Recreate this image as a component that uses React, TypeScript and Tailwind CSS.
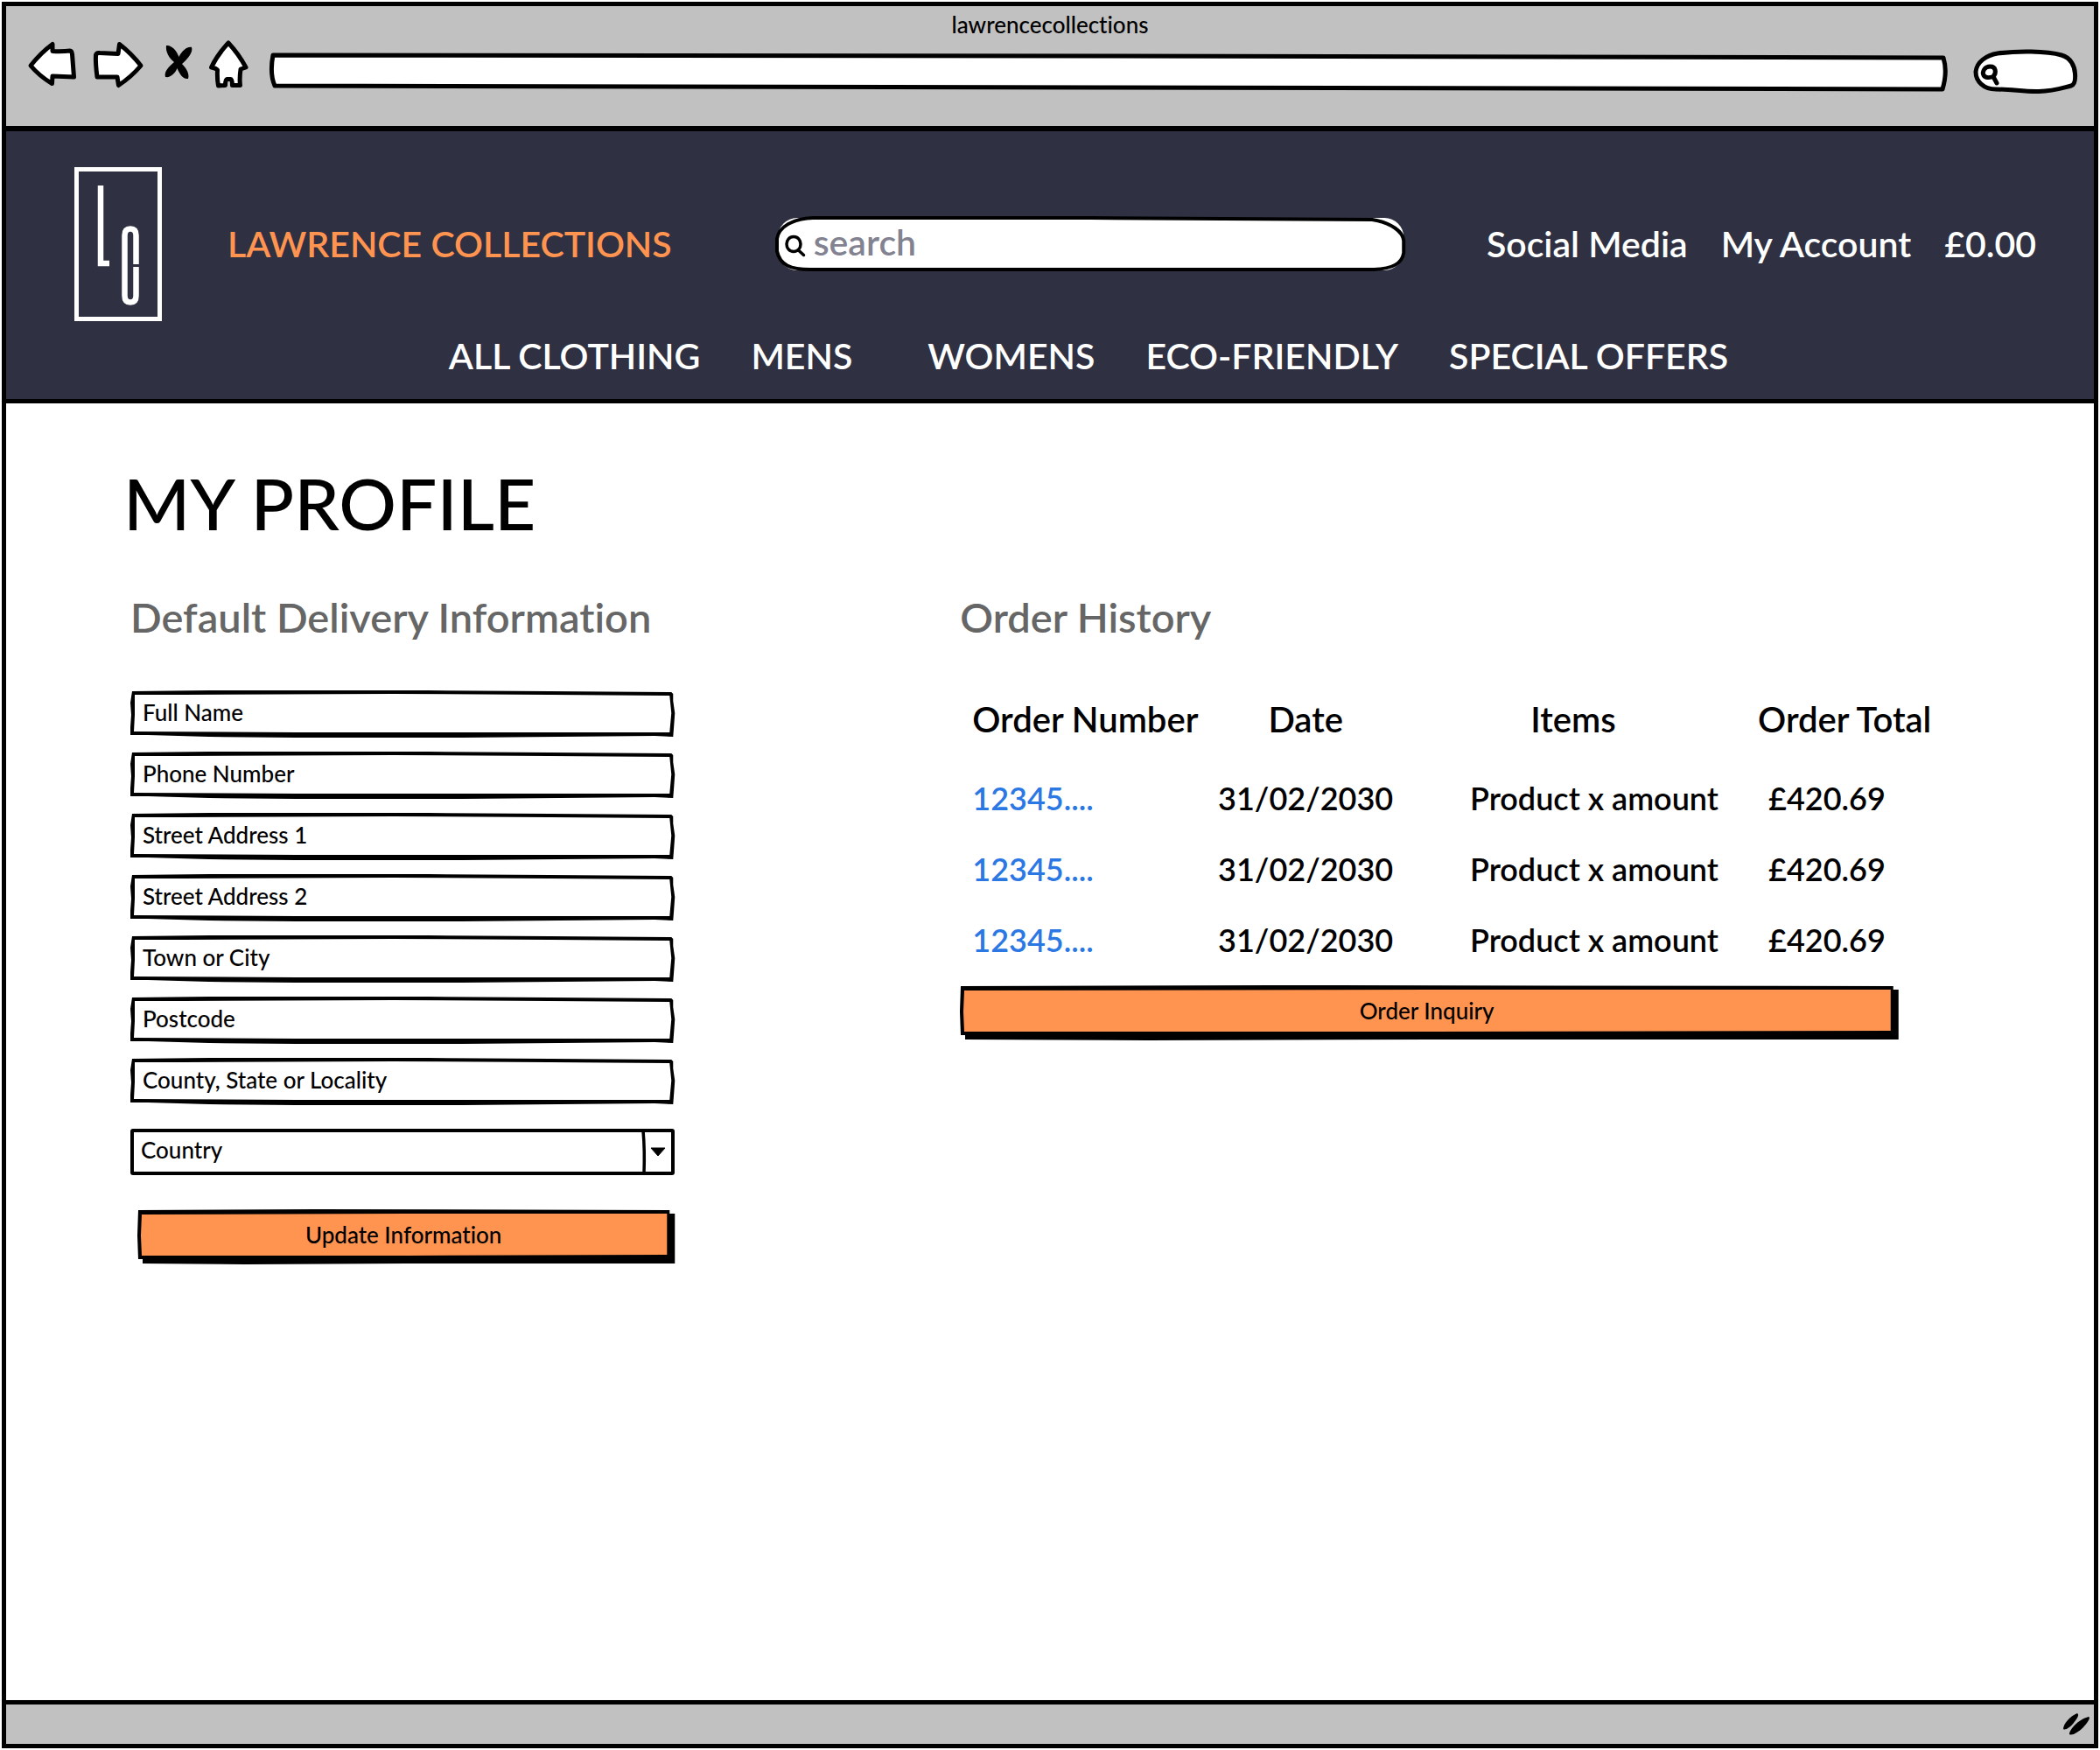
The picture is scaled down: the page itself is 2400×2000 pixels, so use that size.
import React from "react";

const ink = { fill: "#fff", stroke: "#000", strokeWidth: 5, strokeLinejoin: "round", strokeLinecap: "round" } as const;

const fields = [
  "Full Name",
  "Phone Number",
  "Street Address 1",
  "Street Address 2",
  "Town or City",
  "Postcode",
  "County, State or Locality",
];

const orders = [1, 2, 3].map((id) => ({
  id,
  number: "12345....",
  date: "31/02/2030",
  items: "Product x amount",
  total: "£420.69",
}));

function ChromeButton({ label, width, left = 0, children }: { label: string; width: number; left?: number; children: React.ReactNode }) {
  return (
    <button type="button" aria-label={label} className="shrink-0">
      <svg width={width} height="60" viewBox={`${left} 0 ${width} 60`} className="block overflow-visible">
        {children}
      </svg>
    </button>
  );
}

function FieldOutline() {
  return (
    <svg
      viewBox="0 0 623 53"
      preserveAspectRatio="none"
      aria-hidden="true"
      className="pointer-events-none absolute inset-0 h-full w-full overflow-visible"
    >
      <path
        fillRule="evenodd"
        d="M2 1L90 0H340L480 1L619 2L621 4L621 12L623 26L622 40L621 53L600 52L380 54H190L90 53L20 51L0 51L0 42L1 28L0 14ZM5 5L60 5L300 4L480 5L617 6L619 26L617 48L540 48L380 48L190 48L4 47L5 28Z"
      />
    </svg>
  );
}

function SketchButton({ width, children }: { width: number; children: React.ReactNode }) {
  const w = width;
  return (
    <button type="submit" className="relative block h-[62px] w-full pr-1.5 pb-1 text-[26px] leading-8">
      <svg
        viewBox={`0 0 ${w} 62`}
        preserveAspectRatio="none"
        aria-hidden="true"
        className="absolute inset-0 h-full w-full overflow-visible"
      >
        <path d={`M1 1L${w / 3} 0L${w - 6} 1V5H${w}V62H${w / 2}L${w / 5} 63L6 62V57L1 57L0 30Z`} />
        <path fill="#ff9350" d={`M5 6L${w / 2} 5H${w - 9}V52L${w / 2} 53H5L4 30Z`} />
      </svg>
      <span className="relative">{children}</span>
    </button>
  );
}

function BrowserBar() {
  return (
    <div className="border-b-[6px] border-black bg-[#c1c1c1] pt-[3px] pb-[38px]">
      <p className="text-center text-[26px] leading-9">lawrencecollections</p>
      <div className="flex items-start pr-[18px] pl-[25px]">
        <div className="flex gap-5 pr-6">
          <ChromeButton label="Back" width={55}>
            <path {...ink} d="M3 29Q15 14 28 4.500L28 12.500Q40 13 48 12Q50 12 50.500 16L52.500 42L28 41L27.500 49.500Q13 41 3 29Z" />
          </ChromeButton>
          <ChromeButton label="Forward" width={56}>
            <path {...ink} d="M4 42Q2 26 2.500 17Q3 14 7 14.500L28 15.500L29.500 4.500Q43 15 54 29Q43 42 28.500 51.500L27 42Z" />
          </ChromeButton>
          <ChromeButton label="Stop" width={36} left={-5}>
            <path d="M2 6C8 5 14 12 16.500 19C20 12 26 7 31 8C33 13 27 21 20 27C24 31 29 38 27 44C21 45 17 38 14.500 32C12 38 7 43 1 42C-1 36 5 30 11 25C5 20 1 13 2 6Z" />
          </ChromeButton>
          <ChromeButton label="Home" width={45}>
            <path
              {...ink}
              d="M22 3Q34 16 42 31L36 33Q34.500 44 35.500 51.500L26.500 51.500Q26.500 44.500 24.500 44.500H20.500Q18.500 45 18.500 51.500L10.500 52Q9 44 9.500 34Q8 32 2.500 31Q9 17 22 3Z"
            />
          </ChromeButton>
        </div>
        <div className="relative h-[60px] min-w-0 flex-1">
          <svg
            viewBox="0 0 1919 60"
            preserveAspectRatio="none"
            aria-hidden="true"
            className="absolute inset-0 h-full w-full overflow-visible"
          >
            <path
              {...ink}
              vectorEffect="non-scaling-stroke"
              d="M4 17L950 18L1913 20Q1918 36 1912 56L950 54L6 52Q0 38 4 17Z"
            />
          </svg>
          <input aria-label="Address" className="relative h-full w-full bg-transparent px-4 pt-3 text-[26px] outline-none" />
        </div>
        <div className="relative ml-7 h-[60px] w-[120px] shrink-0">
          <svg width="120" height="60" viewBox="0 0 120 60" aria-hidden="true" className="absolute inset-0 overflow-visible">
            <path {...ink} d="M26 56C12 56 3 47 3 36C4 25 15 17 28 15C50 12 84 12 101 17C112 20 116 30 116.500 38C117 45 116 51 112 52C100 55 92 58 75 58.500C58 59 45 56 26 56Z" />
            <path {...ink} fill="none" strokeWidth={5} d="M23 41.500C27 37 26 30 19.500 30C13 30 10 36 12 40C14 43 19 43 23 41.500L27 49" />
          </svg>
          <input aria-label="Search the web" className="relative h-full w-full bg-transparent pt-3 pr-4 pl-9 outline-none" />
        </div>
      </div>
    </div>
  );
}

function Logo() {
  return (
    <svg width="100" height="176" viewBox="0 0 100 176" role="img" aria-label="LC" className="shrink-0">
      <g fill="none" stroke="#fff">
        <path strokeWidth="5" d="M2.500 2.500H97.500V173.500H2.500Z" />
        <path strokeWidth="6.500" d="M30 21V110H40" />
        <path strokeWidth="6.500" d="M70.500 111V78Q70.500 70.500 64 70.500T57.500 78V147Q57.500 154.500 64 154.500T70.500 147V114" />
      </g>
    </svg>
  );
}

function SiteHeader() {
  return (
    <header className="border-b-[5px] border-black bg-[#2f3142] pt-[41px] pr-[66px] pb-[25px] pl-[78px] text-[41px] leading-[48px] font-semibold text-white">
      <div className="flex items-center">
        <Logo />
        <a href="#" className="ml-[75px] whitespace-nowrap text-[#ff9350]">
          LAWRENCE COLLECTIONS
        </a>
        <form role="search" className="relative mr-[92px] ml-[118px] h-16 min-w-0 flex-1">
          <svg
            viewBox="0 0 721 64"
            preserveAspectRatio="none"
            aria-hidden="true"
            className="absolute inset-0 h-full w-full overflow-visible"
          >
            <rect x="3" y="2" width="715" height="60" rx="22" fill="#fff" />
            <path
              {...ink}
              strokeWidth={4}
              d="M43 2L360 2L682 4C705 8 717 18 718 28V42C716 54 706 60 684 61H45C16 62 5 55 2 40V26C4 12 20 3 43 2Z"
            />
          </svg>
          <svg width="24" height="26" viewBox="0 0 24 26" aria-hidden="true" className="absolute top-[21px] left-[11px]">
            <path fill="none" stroke="#000" strokeWidth="3.500" strokeLinecap="round" d="M10 2.500C5 2.500 2 6.500 2 11S5 19.500 10 19.500S18 15.500 18 11S15 2.500 10 2.500M15.500 18L21.500 23.500" />
          </svg>
          <input
            aria-label="Search"
            placeholder="search"
            className="relative h-full w-full bg-transparent pr-6 pb-1.5 pl-11 text-black outline-none placeholder:text-[#828291]"
          />
        </form>
        <nav aria-label="Account" className="flex gap-[38px] whitespace-nowrap">
          <a href="#">Social Media</a>
          <a href="#">My Account</a>
          <a href="#">£0.00</a>
        </nav>
      </div>
      <nav aria-label="Categories" className="mt-4 flex justify-center gap-[58px] pl-[76px] whitespace-nowrap">
        <a href="#">ALL CLOTHING</a>
        <a href="#" className="mr-7">MENS</a>
        <a href="#">WOMENS</a>
        <a href="#">ECO-FRIENDLY</a>
        <a href="#">SPECIAL OFFERS</a>
      </nav>
    </header>
  );
}

function DeliveryForm() {
  return (
    <section>
      <h2 className="text-[47px] leading-[56px] font-semibold whitespace-nowrap text-[#666]">Default Delivery Information</h2>
      <form className="mt-14">
        <div className="flex flex-col gap-[17px]">
          {fields.map((name) => (
            <div key={name} className="relative h-[53px]">
              <FieldOutline />
              <input
                aria-label={name}
                placeholder={name}
                className="relative block h-full w-full bg-transparent px-3.5 pb-1 text-[26px] outline-none placeholder:text-black placeholder:opacity-100"
              />
            </div>
          ))}
        </div>
        <div className="relative mt-7 h-[53px]">
          <select
            aria-label="Country"
            className="block h-full w-full appearance-none rounded-[3px] border-4 border-black bg-white pb-1 pl-2 text-[26px] outline-none"
          >
            <option>Country</option>
          </select>
          <svg width="38" height="53" viewBox="0 0 38 53" aria-hidden="true" className="pointer-events-none absolute top-0 right-0">
            <path fill="none" stroke="#000" strokeWidth="3.500" d="M2 2Q4 25 3 51" />
            <path stroke="#000" strokeLinejoin="round" d="M11 22H27L19 31Z" />
          </svg>
        </div>
        <div className="mt-[39px] pl-2">
          <SketchButton width={616}>Update Information</SketchButton>
        </div>
      </form>
    </section>
  );
}

function OrderHistory() {
  return (
    <section>
      <h2 className="text-[47px] leading-[56px] font-semibold text-[#666]">Order History</h2>
      <table className="mt-10 w-full table-fixed whitespace-nowrap">
        <thead className="text-[40px]">
          <tr className="h-[98px]">
            <th className="w-[25%] pl-3.5 text-left font-semibold">Order Number</th>
            <th className="w-[24%] pr-1 text-center font-semibold">Date</th>
            <th className="w-[36%] pr-9 text-center font-semibold">Items</th>
            <th className="w-[15%] text-left font-semibold">Order Total</th>
          </tr>
        </thead>
        <tbody className="text-[36px] font-semibold">
          {orders.map((o) => (
            <tr key={o.id} className="h-[81px]">
              <td className="pl-3.5">
                <a href="#" className="text-[#2b78e4]">{o.number}</a>
              </td>
              <td className="pr-1 text-center">{o.date}</td>
              <td className="pl-3 text-center">{o.items}</td>
              <td className="pl-3">{o.total}</td>
            </tr>
          ))}
        </tbody>
      </table>
      <div className="mt-3">
        <SketchButton width={1074}>Order Inquiry</SketchButton>
      </div>
    </section>
  );
}

export default function App() {
  return (
    <div className="flex min-h-screen bg-white p-0.5 font-['Lato',sans-serif] font-medium text-black [font-variant-ligatures:no-common-ligatures]">
      <div className="flex min-w-0 flex-1 flex-col border-[5px] border-black">
        <BrowserBar />
        <SiteHeader />
        <main className="flex-1 pt-[73px] pr-[223px] pb-12 pl-[134px]">
          <h1 className="text-[82px] leading-[80px] font-medium">MY PROFILE</h1>
          <div className="mt-[63px] grid grid-cols-[623fr_1074fr] gap-x-[326px] pl-2">
            <DeliveryForm />
            <OrderHistory />
          </div>
        </main>
        <footer className="flex h-[50px] items-center justify-end border-t-[5px] border-black bg-[#c1c1c1] pr-1">
          <svg width="32" height="28" viewBox="0 0 32 28" aria-hidden="true">
            <path d="M1 19C1 13 9 4 17 1C20 3 16 8 13 12C9 17 3 21 1 19ZM8 25C8 20 18 8 30 5C33 6 28 13 24 17C18 23 11 27 8 25Z" />
          </svg>
        </footer>
      </div>
    </div>
  );
}
